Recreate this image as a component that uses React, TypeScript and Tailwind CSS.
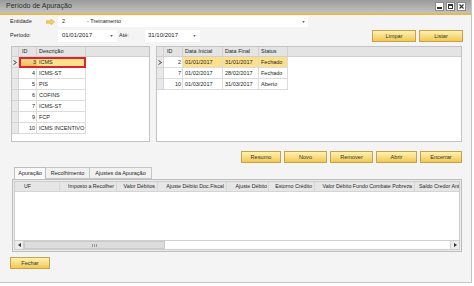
const leftRows = [
  { id: '3', desc: 'ICMS', sel: true },
  { id: '4', desc: 'ICMS-ST' },
  { id: '5', desc: 'PIS' },
  { id: '6', desc: 'COFINS' },
  { id: '7', desc: 'ICMS-ST' },
  { id: '9', desc: 'FCP' },
  { id: '10', desc: 'ICMS INCENTIVO' },
];

const rightRows = [
  { id: '2', ini: '01/01/2017', fim: '31/01/2017', status: 'Fechado', sel: true },
  { id: '7', ini: '01/02/2017', fim: '28/02/2017', status: 'Fechado' },
  { id: '10', ini: '01/03/2017', fim: '31/03/2017', status: 'Aberto' },
];

const cols = [
  { label: 'UF', w: 'w-[45px]', align: 'justify-start pl-[9px]' },
  { label: 'Imposto a Recolher', w: 'w-[57px]', align: 'justify-end pr-[2px]' },
  { label: 'Valor Débitos', w: 'w-[41px]', align: 'justify-end pr-[2px]' },
  { label: 'Ajuste Débito Doc.Fiscal', w: 'w-[69px]', align: 'justify-end pr-[2px]' },
  { label: 'Ajuste Débito', w: 'w-[42px]', align: 'justify-end pr-[1px]' },
  { label: 'Estorno Crédito', w: 'w-[46px]', align: 'justify-end pr-[2px]' },
  { label: 'Valor Débito Fundo Combate Pobreza', w: 'w-[100px]', align: 'justify-end pr-[2px]' },
  { label: 'Saldo Credor Ant', w: 'w-[50px]', align: 'justify-start pl-[4px]' },
];

function Btn({ label, w }: { label: string; w: string }) {
  return (
    <div className={`${w} h-[12px] border border-[#c8a24a] bg-linear-to-b from-[#fff2b0] to-[#f1c84e] flex items-center justify-center text-[5.6px] text-[#333] shrink-0`}>
      {label}
    </div>
  );
}

function Caret() {
  return (
    <svg width="3" height="2" viewBox="0 0 4 3" className="shrink-0">
      <path d="M0 0h4L2 3z" fill="#666" />
    </svg>
  );
}

function RowArrow() {
  return (
    <svg width="4" height="5" viewBox="0 0 4 5">
      <path d="M0.5 0.5L3.5 2.5L0.5 4.5" stroke="#333" strokeWidth="0.9" fill="none" />
    </svg>
  );
}

export default function App() {
  return (
    <div className="w-[474px] h-[286px] bg-white font-['Liberation_Sans',Arial,sans-serif] text-[5.5px] text-[#262626] overflow-hidden whitespace-nowrap">
      <div className="w-[472px] h-[283px] bg-[#f4f4f4] border-r border-b border-[#c4c4c4] flex flex-col">
        {/* title bar */}
        <div className="h-[15px] shrink-0 bg-linear-to-b from-[#9b9b9b] to-[#c2c2c2] border-b-2 border-[#e8b84a] flex items-center pl-[6px] pr-[5px]">
          <span className="text-[7px] text-[#2e2e2e]">Período de Apuração</span>
          <div className="ml-auto flex gap-[2px]">
            <div className="w-[9px] h-[9px] bg-white border border-[#8a8a8a] flex items-end justify-center pb-[1px]">
              <div className="w-[5px] h-[2px] bg-[#333]" />
            </div>
            <div className="w-[9px] h-[9px] bg-white border border-[#8a8a8a] flex items-center justify-center">
              <div className="w-[5px] h-[5px] border border-[#333] border-t-2" />
            </div>
            <div className="w-[9px] h-[9px] bg-white border border-[#8a8a8a] flex items-center justify-center">
              <svg width="5" height="5" viewBox="0 0 5 5">
                <path d="M0.5 0.5L4.5 4.5M4.5 0.5L0.5 4.5" stroke="#333" strokeWidth="1.2" />
              </svg>
            </div>
          </div>
        </div>

        <div className="flex flex-col pl-[10px] pr-[8px]">
          {/* Entidade */}
          <div className="mt-[1px] h-[11px] flex items-center">
            <span className="w-[35px]">Entidade</span>
            <svg width="9" height="6" viewBox="0 0 9 6" className="ml-[1px]">
              <path d="M0.5 1.8H5V0.3L8.5 3L5 5.7V4.2H0.5Z" fill="#f7d55a" stroke="#d8a42a" strokeWidth="0.6" />
            </svg>
            <div className="ml-[3px] w-[250px] h-[11px] bg-white flex items-center pl-[4px] pr-[3px]">
              <span>2</span>
              <span className="ml-[22px]">- Treinamento</span>
              <span className="ml-auto"><Caret /></span>
            </div>
          </div>

          {/* Período */}
          <div className="mt-[2px] h-[13px] flex items-center">
            <span className="w-[48px]">Período:</span>
            <div className="w-[59px] h-[12px] bg-white flex items-center pl-[4px] pr-[4px] text-[6px]">
              <span>01/01/2017</span>
              <span className="ml-auto"><Caret /></span>
            </div>
            <span className="ml-[2px] w-[26px]">Até:</span>
            <div className="w-[55px] h-[12px] bg-white flex items-center pl-[3px] pr-[4px] text-[6px]">
              <span>31/10/2017</span>
              <span className="ml-auto"><Caret /></span>
            </div>
            <div className="ml-auto flex gap-[3px] self-end">
              <Btn label="Limpar" w="w-[44px]" />
              <Btn label="Listar" w="w-[44px]" />
            </div>
          </div>

          {/* grids */}
          <div className="mt-[4px] h-[96px] flex gap-[6px] pl-[1px]">
            <div className="w-[139px] h-full border border-[#c3c3c3] bg-white flex flex-col">
              <div className="h-[10px] bg-[#e4e4e4] flex border-b border-[#cfcfcf] shrink-0">
                <div className="w-[7px] border-r border-[#d2d2d2]" />
                <div className="w-[18px] border-r border-[#d2d2d2] pl-[3px] flex items-center">ID</div>
                <div className="w-[49px] border-r border-[#d2d2d2] pl-[2px] flex items-center">Descrição</div>
              </div>
              {leftRows.map((r) => (
                <div key={r.id} className="h-[11px] flex shrink-0">
                  <div className="w-[7px] bg-[#e9e9e9] border-r border-b border-[#d4d4d4] flex items-center justify-center">
                    {r.sel && <RowArrow />}
                  </div>
                  {r.sel ? (
                    <div className="flex border-2 border-[#d8262d]">
                      <div className="w-[16px] bg-linear-to-b from-[#f9d98a] to-[#f2bd5a] flex items-center justify-end pr-[1px]">{r.id}</div>
                      <div className="w-[47px] bg-[#fde28e] flex items-center pl-[2px]">{r.desc}</div>
                    </div>
                  ) : (
                    <>
                      <div className="w-[18px] border-r border-b border-[#dcdcdc] flex items-center justify-end pr-[1px]">{r.id}</div>
                      <div className="w-[49px] border-r border-b border-[#dcdcdc] flex items-center pl-[2px] overflow-hidden">{r.desc}</div>
                    </>
                  )}
                </div>
              ))}
            </div>

            <div className="w-[306px] h-full border border-[#c3c3c3] bg-white flex flex-col">
              <div className="h-[10px] bg-[#e4e4e4] flex border-b border-[#cfcfcf] shrink-0">
                <div className="w-[7px] border-r border-[#d2d2d2]" />
                <div className="w-[19px] border-r border-[#d2d2d2] pl-[3px] flex items-center">ID</div>
                <div className="w-[40px] border-r border-[#d2d2d2] pl-[2px] flex items-center">Data Inicial</div>
                <div className="w-[36px] border-r border-[#d2d2d2] pl-[2px] flex items-center">Data Final</div>
                <div className="w-[29px] border-r border-[#d2d2d2] pl-[2px] flex items-center">Status</div>
              </div>
              {rightRows.map((r) => (
                <div key={r.id} className="h-[11px] flex shrink-0">
                  <div className="w-[7px] bg-[#e9e9e9] border-r border-b border-[#d4d4d4] flex items-center justify-center">
                    {r.sel && <RowArrow />}
                  </div>
                  <div className="w-[19px] border-r border-b border-[#dcdcdc] flex items-center justify-end pr-[1px]">{r.id}</div>
                  <div className={`w-[40px] border-r border-b border-[#dcdcdc] flex items-center pl-[2px] ${r.sel ? 'bg-[#fde08c]' : ''}`}>{r.ini}</div>
                  <div className={`w-[36px] border-r border-b border-[#dcdcdc] flex items-center pl-[2px] ${r.sel ? 'bg-[#fde08c]' : ''}`}>{r.fim}</div>
                  <div className={`w-[29px] border-r border-b border-[#dcdcdc] flex items-center pl-[2px] ${r.sel ? 'bg-[#fde08c]' : ''}`}>{r.status}</div>
                </div>
              ))}
            </div>
          </div>

          {/* action buttons */}
          <div className="mt-[9px] h-[12px] flex justify-end gap-[3px] pr-[1px]">
            <Btn label="Resumo" w="w-[40px]" />
            <Btn label="Novo" w="w-[43px]" />
            <Btn label="Remover" w="w-[43px]" />
            <Btn label="Abrir" w="w-[41px]" />
            <Btn label="Encerrar" w="w-[42px]" />
          </div>

          {/* tabs */}
          <div className="mt-[4px] h-[12px] flex pl-[4px] items-end">
            <div className="w-[32px] h-[12px] bg-[#fafafa] border border-b-0 border-[#bdbdbd] flex items-center justify-center">Apuração</div>
            <div className="w-[44px] h-[12px] bg-[#f1f1f1] border border-l-0 border-[#c6c6c6] flex items-center justify-center">Recolhimento</div>
            <div className="w-[62px] h-[12px] bg-[#f1f1f1] border border-l-0 border-[#c6c6c6] flex items-center justify-center">Ajustes da Apuração</div>
          </div>

          {/* panel */}
          <div className="ml-[2px] w-[450px] h-[73px] border border-[#bdbdbd] bg-[#ececec] p-[1px] flex flex-col">
            <div className="flex-1 bg-white border border-[#cdcdcd] flex flex-col overflow-hidden">
              <div className="h-[10px] bg-[#e6e6e6] flex shrink-0 border-b border-[#d4d4d4] text-[5.3px]">
                {cols.map((c) => (
                  <div key={c.label} className={`${c.w} shrink-0 border-r border-[#d6d6d6] flex items-center overflow-hidden ${c.align}`}>{c.label}</div>
                ))}
              </div>
              <div className="flex-1" />
              <div className="h-[9px] flex shrink-0 border-t border-[#cfcfcf] bg-[#f7f7f7]">
                <div className="w-[9px] flex items-center justify-center bg-[#ececec] border-r border-[#d0d0d0]">
                  <svg width="3" height="4" viewBox="0 0 3 4"><path d="M3 0v4L0 2z" fill="#333" /></svg>
                </div>
                <div className="w-[141px] bg-[#dcdcdc] border border-[#cacaca] flex items-center justify-center">
                  <div className="flex gap-[1px]">
                    <div className="w-[1px] h-[3px] bg-[#999]" />
                    <div className="w-[1px] h-[3px] bg-[#999]" />
                    <div className="w-[1px] h-[3px] bg-[#999]" />
                  </div>
                </div>
                <div className="flex-1 bg-white" />
                <div className="w-[9px] flex items-center justify-center bg-[#ececec] border-l border-[#d0d0d0]">
                  <svg width="3" height="4" viewBox="0 0 3 4"><path d="M0 0v4L3 2z" fill="#333" /></svg>
                </div>
              </div>
            </div>
          </div>

          {/* Fechar */}
          <div className="mt-[5px]">
            <Btn label="Fechar" w="w-[40px]" />
          </div>
        </div>
      </div>
    </div>
  );
}
